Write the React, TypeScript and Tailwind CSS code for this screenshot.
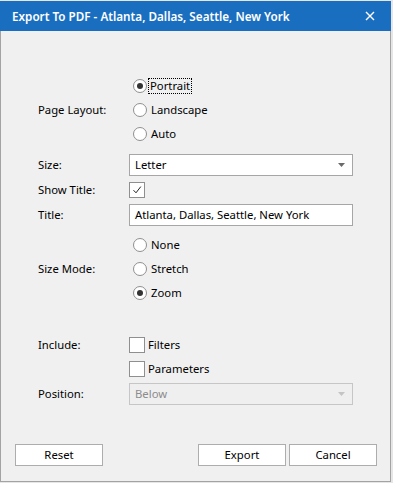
import React from "react";

const font = { fontFamily: '"Noto Sans", "Segoe UI", sans-serif' };

function Radio({ label, checked, focus }: { label: string; checked?: boolean; focus?: boolean }) {
  return (
    <div className="flex h-[24px] items-center">
      <div className="ml-[4px] flex h-[14px] w-[14px] items-center justify-center rounded-full border border-[#8f8f8f] bg-white">
        {checked && <div className="h-[6px] w-[6px] rounded-full bg-[#333]" />}
      </div>
      <span
        className={
          "ml-[2px] pl-[1px] pr-[1px] leading-[14px] " +
          (focus ? "outline outline-1 outline-dotted outline-black" : "border border-transparent")
        }
      >
        {label}
      </span>
    </div>
  );
}

function Check({ checked, label }: { checked?: boolean; label?: string }) {
  return (
    <div className="flex h-[16px] items-center">
      <div className="flex h-[16px] w-[16px] items-center justify-center border border-[#8f8f8f] bg-white">
        {checked && (
          <svg width="10" height="10" viewBox="0 0 10 10">
            <path d="M1.5 5.2 L4 7.8 L8.8 1.6" fill="none" stroke="#222" strokeWidth="1" />
          </svg>
        )}
      </div>
      {label && <span className="ml-[3px]">{label}</span>}
    </div>
  );
}

function Select({ value, disabled }: { value: string; disabled?: boolean }) {
  return (
    <div
      className={
        "flex h-[22px] w-[224px] items-center justify-between border pl-[5px] pr-[7px] " +
        (disabled ? "border-[#c6c6c6] bg-[#efefef] text-[#8c8c8c]" : "border-[#a6a6a6] bg-white text-black")
      }
    >
      <span>{value}</span>
      <svg width="7" height="4" viewBox="0 0 7 4">
        <path d="M0 0 H7 L3.5 4 Z" fill={disabled ? "#c4c4c4" : "#6a6a6a"} />
      </svg>
    </div>
  );
}

function Label({ children }: { children?: React.ReactNode }) {
  return <div className="w-[91px] shrink-0">{children}</div>;
}

function Button({ children, w = "w-[88px]" }: { children: React.ReactNode; w?: string }) {
  return (
    <div className={"flex h-[22px] items-center justify-center border border-[#adadad] bg-white " + w}>
      {children}
    </div>
  );
}

export default function App() {
  return (
    <div className="h-[483px] w-[393px] bg-[#e6e6e6] pt-[1px] text-[11.3px] leading-[16px] text-black" style={font}>
      <div className="flex h-[481px] w-[391px] flex-col">
        <div className="flex h-[30px] shrink-0 items-center justify-between bg-[#1a6ec0] pl-[12px] pr-[16px] text-white">
          <span className="text-[11.7px] font-semibold">Export To PDF - Atlanta, Dallas, Seattle, New York</span>
          <svg width="10" height="10" viewBox="0 0 10 10">
            <path d="M1 1 L9 9 M9 1 L1 9" stroke="white" strokeWidth="1.4" />
          </svg>
        </div>
        <div className="flex flex-1 flex-col border-x border-b border-[#a3a3a3] bg-[#f0f0f0] pl-[37px]">
          <div className="mt-[43px] flex items-center">
            <Label>Page Layout:</Label>
            <div className="flex flex-col">
              <Radio label="Portrait" checked focus />
              <Radio label="Landscape" />
              <Radio label="Auto" />
            </div>
          </div>
          <div className="mt-[8px] flex items-center">
            <Label>Size:</Label>
            <Select value="Letter" />
          </div>
          <div className="mt-[6px] flex items-center">
            <Label>Show Title:</Label>
            <Check checked />
          </div>
          <div className="mt-[6px] flex items-center">
            <Label>Title:</Label>
            <div className="flex h-[22px] w-[224px] items-center border border-[#a6a6a6] bg-white pl-[5px]">
              Atlanta, Dallas, Seattle, New York
            </div>
          </div>
          <div className="mt-[7px] flex items-center">
            <Label>Size Mode:</Label>
            <div className="flex flex-col">
              <Radio label="None" />
              <Radio label="Stretch" />
              <Radio label="Zoom" checked />
            </div>
          </div>
          <div className="mt-[32px] flex items-center">
            <Label>Include:</Label>
            <Check label="Filters" />
          </div>
          <div className="mt-[8px] flex items-center">
            <Label />
            <Check label="Parameters" />
          </div>
          <div className="mt-[6px] flex items-center">
            <Label>Position:</Label>
            <Select value="Below" disabled />
          </div>
          <div className="mt-[39px] flex items-center pr-[13px]">
            <div className="-ml-[23px]">
              <Button>Reset</Button>
            </div>
            <div className="flex-1" />
            <Button>Export</Button>
            <div className="w-[3px]" />
            <Button>Cancel</Button>
          </div>
        </div>
      </div>
    </div>
  );
}
